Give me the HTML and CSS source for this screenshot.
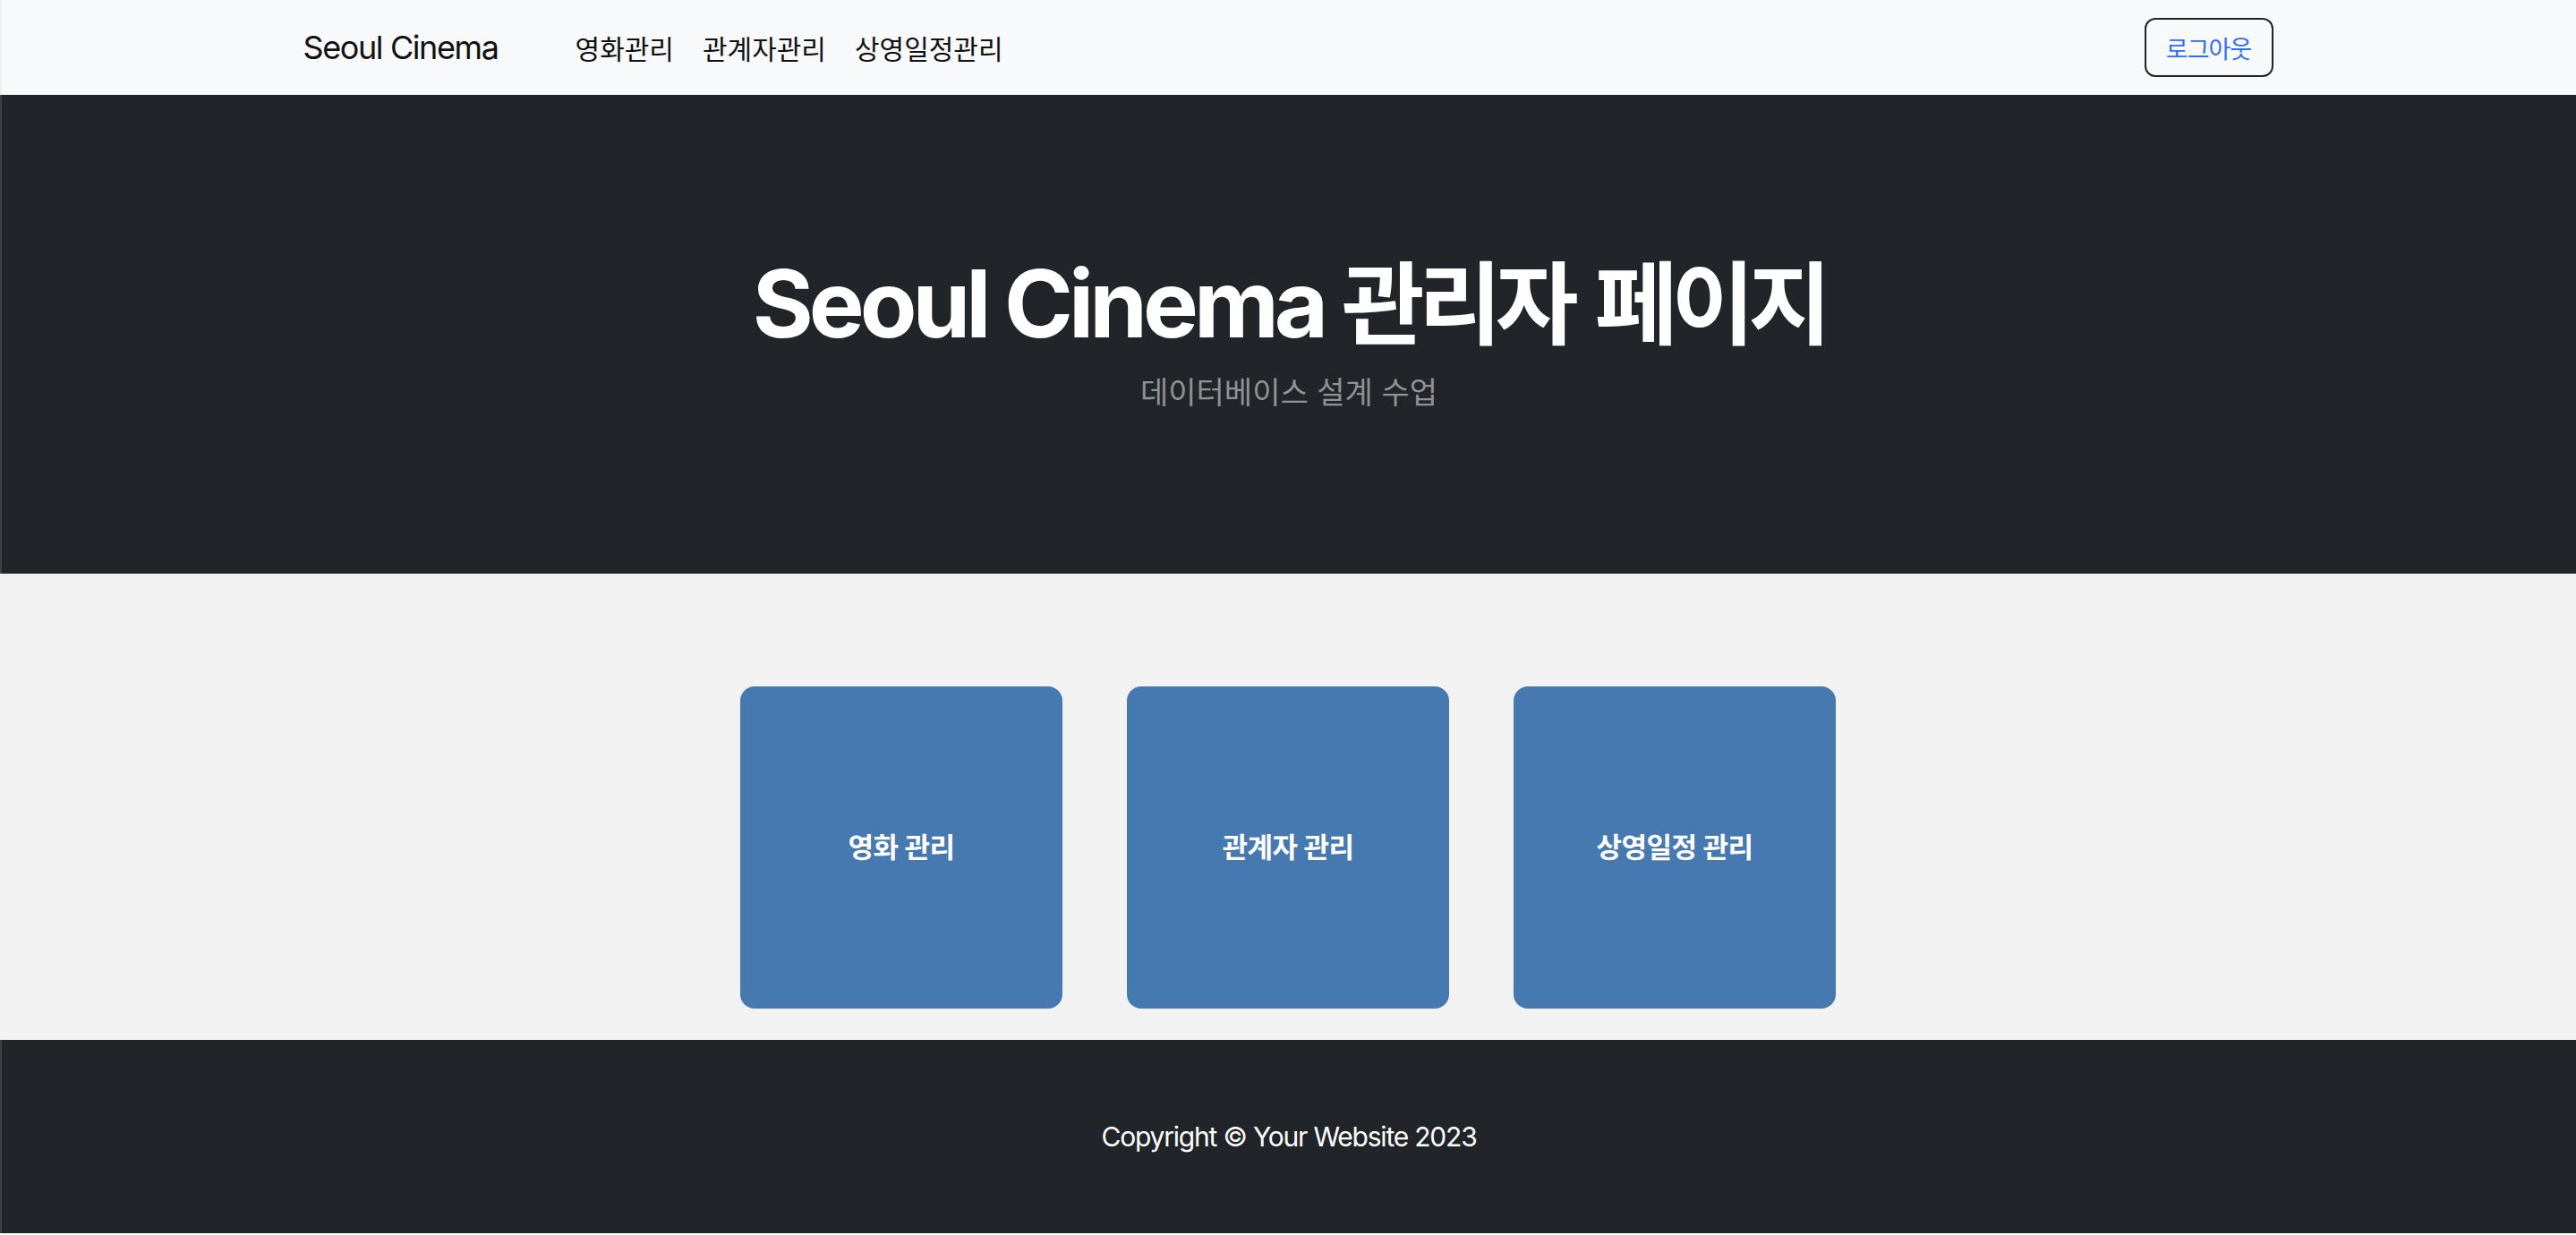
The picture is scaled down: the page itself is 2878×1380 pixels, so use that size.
FILE: index.html
```html
<!DOCTYPE html>
<html lang="ko">
<head>
<meta charset="utf-8">
<title>Seoul Cinema 관리자 페이지</title>
<link rel="stylesheet" href="styles.css">
</head>
<body>
<nav class="navbar">
  <div class="nav-inner">
    <div class="nav-left">
      <a class="brand" href="#">Seoul Cinema</a>
      <ul class="nav-links">
        <li><a href="#">영화관리</a></li>
        <li><a href="#">관계자관리</a></li>
        <li><a href="#">상영일정관리</a></li>
      </ul>
    </div>
    <a class="btn-logout" href="#">로그아웃</a>
  </div>
</nav>
<header class="hero">
  <h1 class="hero-title">Seoul Cinema <span class="ko">관리자 페이지</span></h1>
  <p class="hero-lead">데이터베이스 설계 수업</p>
</header>
<section class="tiles">
  <a class="tile" href="#">영화 관리</a>
  <a class="tile" href="#">관계자 관리</a>
  <a class="tile" href="#">상영일정 관리</a>
</section>
<footer class="footer">
  <p>Copyright © Your Website 2023</p>
</footer>
</body>
</html>
```
FILE: styles.css
```css
* { box-sizing: border-box; }
html, body { margin: 0; padding: 0; }
body {
  background: #ffffff;
  font-family: Inter, "Noto Sans CJK KR", sans-serif;
  color: #212529;
  height: 1380px;
}
a { text-decoration: none; }

.navbar {
  height: 106px;
  background: #f8f9fa;
  border-left: 2px solid #eef0f2;
}
.nav-inner {
  height: 100%;
  margin: 0 auto;
  width: 2201px;
  display: flex;
  align-items: center;
  justify-content: space-between;
  position: relative;
  left: -1px;
}
.nav-left { display: flex; align-items: center; }
.brand {
  font-size: 36px;
  color: #111;
  letter-spacing: -1.4px;
  margin-right: 70px;
}
.nav-links {
  list-style: none;
  margin: 0;
  padding: 0;
  display: flex;
}
.nav-links a {
  display: block;
  padding: 0 16px;
  font-size: 30px;
  letter-spacing: 0;
  color: #111;
}
.btn-logout {
  width: 144px;
  height: 66px;
  border: 2px solid #212529;
  border-radius: 12px;
  display: flex;
  align-items: center;
  justify-content: center;
  font-size: 27px;
  letter-spacing: -1px;
  color: #2f6ff0;
}

.hero {
  height: 535px;
  background: #212529;
  border-left: 2px solid #3d4043;
  text-align: center;
  padding-top: 168px;
}
.hero-title {
  margin: 0;
  font-size: 104px;
  line-height: 130px;
  font-weight: 700;
  color: #fff;
  letter-spacing: -5px;
}
.hero-title .ko {
  font-size: 101px;
  letter-spacing: -7px;
  word-spacing: 8px;
}
.hero-lead {
  margin: 8px 0 0;
  font-size: 34px;
  line-height: 51px;
  color: #909294;
  letter-spacing: 0;
}

.tiles {
  height: 521px;
  background: #f2f2f2;
  display: flex;
  justify-content: center;
  gap: 72px;
  padding-top: 126px;
}
.tile {
  width: 360px;
  height: 360px;
  border-radius: 16px;
  background: #4779b1;
  color: #fff;
  display: flex;
  align-items: center;
  justify-content: center;
  padding-bottom: 6px;
  font-size: 31px;
  font-weight: 700;
  letter-spacing: -0.5px;
}

.footer {
  height: 216px;
  background: #212529;
  border-left: 2px solid #3d4043;
  display: flex;
  align-items: center;
  justify-content: center;
}
.footer p {
  margin: 0;
  color: #fff;
  font-size: 30px;
  letter-spacing: -1.2px;
}
```
